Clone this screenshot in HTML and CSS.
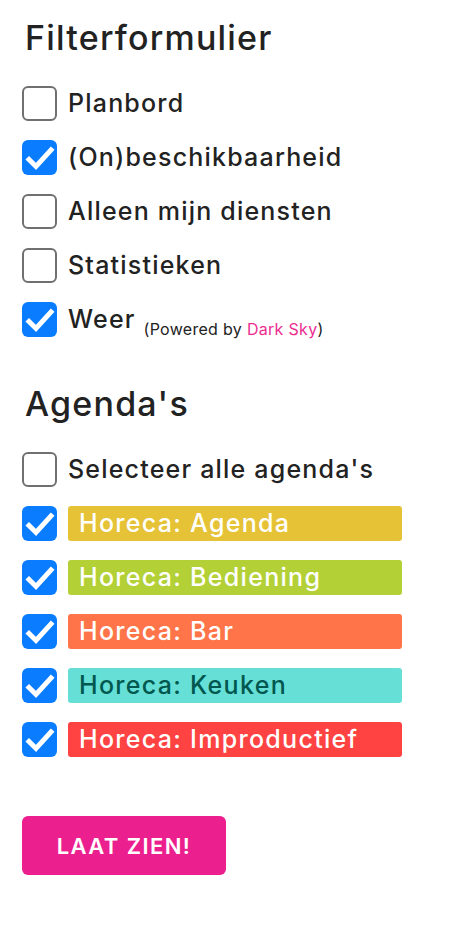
FILE: index.html
```html
<!DOCTYPE html>
<html lang="nl">
<head>
<meta charset="utf-8">
<link rel="stylesheet" href="styles.css">
</head>
<body>
<form class="filter">
  <h2 class="title">Filterformulier</h2>
  <div class="list">
    <label class="row"><span class="box"></span><span class="text">Planbord</span></label>
    <label class="row"><span class="box on"><svg viewBox="0 0 35 35"><path d="M7 19.5 L14 26.5 L29 10" /></svg></span><span class="text">(On)beschikbaarheid</span></label>
    <label class="row"><span class="box"></span><span class="text">Alleen mijn diensten</span></label>
    <label class="row"><span class="box"></span><span class="text">Statistieken</span></label>
    <label class="row"><span class="box on"><svg viewBox="0 0 35 35"><path d="M7 19.5 L14 26.5 L29 10" /></svg></span><span class="text">Weer <small class="powered">(Powered by <a class="link">Dark Sky</a>)</small></span></label>
  </div>

  <h2 class="title second">Agenda's</h2>
  <div class="list">
    <label class="row"><span class="box"></span><span class="text">Selecteer alle agenda's</span></label>
    <label class="row"><span class="box on"><svg viewBox="0 0 35 35"><path d="M7 19.5 L14 26.5 L29 10" /></svg></span><span class="tag agenda">Horeca: Agenda</span></label>
    <label class="row"><span class="box on"><svg viewBox="0 0 35 35"><path d="M7 19.5 L14 26.5 L29 10" /></svg></span><span class="tag bediening">Horeca: Bediening</span></label>
    <label class="row"><span class="box on"><svg viewBox="0 0 35 35"><path d="M7 19.5 L14 26.5 L29 10" /></svg></span><span class="tag bar">Horeca: Bar</span></label>
    <label class="row"><span class="box on"><svg viewBox="0 0 35 35"><path d="M7 19.5 L14 26.5 L29 10" /></svg></span><span class="tag keuken">Horeca: Keuken</span></label>
    <label class="row"><span class="box on"><svg viewBox="0 0 35 35"><path d="M7 19.5 L14 26.5 L29 10" /></svg></span><span class="tag improductief">Horeca: Improductief</span></label>
  </div>

  <button type="button" class="submit">LAAT ZIEN!</button>
</form>
</body>
</html>
```

FILE: styles.css
```css
html, body {
  margin: 0;
  padding: 0;
  background: #ffffff;
}

body {
  font-family: Inter, "Open Sans", sans-serif;
  color: #222222;
}

.filter {
  padding: 16px 0 0 22px;
  width: 380px;
}

.title {
  margin: 0 0 0 3px;
  font-size: 34px;
  font-weight: 500;
  line-height: 44px;
  color: #222222;
  letter-spacing: 1.2px;
}

.title.second {
  margin-top: 45px;
}

.list {
  display: flex;
  flex-direction: column;
  gap: 19px;
  margin-top: 26px;
}

.row {
  display: flex;
  align-items: center;
  gap: 11px;
  height: 35px;
}

.box {
  box-sizing: border-box;
  flex: 0 0 35px;
  width: 35px;
  height: 35px;
  border: 2px solid #707070;
  border-radius: 6px;
  background: #ffffff;
  display: flex;
}

.box.on {
  border: none;
  background: #0a7cff;
}

.box svg {
  width: 35px;
  height: 35px;
}

.box svg path {
  fill: none;
  stroke: #ffffff;
  stroke-width: 5;
  stroke-linecap: square;
  stroke-linejoin: miter;
}

.text {
  font-size: 25px;
  font-weight: 500;
  letter-spacing: 1.2px;
  line-height: 35px;
  color: #222222;
  white-space: nowrap;
}

.powered {
  font-size: 16px;
  font-weight: 400;
  letter-spacing: 0.3px;
  vertical-align: -7px;
  line-height: 1;
  color: #222222;
}

.link {
  color: #ec2d8f;
}

.tag {
  flex: 1;
  box-sizing: border-box;
  height: 35px;
  border-radius: 3px;
  padding-left: 11px;
  font-size: 25px;
  font-weight: 500;
  letter-spacing: 1.3px;
  line-height: 35px;
  color: #ffffff;
  white-space: nowrap;
}

.agenda { background: #e6c236; }
.bediening { background: #b3d036; }
.bar { background: #ff7448; }
.keuken { background: #66e0d6; color: #00574f; }
.improductief { background: #ff4242; }

.submit {
  margin-top: 59px;
  width: 204px;
  height: 59px;
  border: none;
  border-radius: 6px;
  background: #ec1f8f;
  color: #ffffff;
  font-family: Inter, "Open Sans", sans-serif;
  font-size: 22px;
  font-weight: 600;
  letter-spacing: 1.4px;
  padding: 0;
  cursor: pointer;
}
```
